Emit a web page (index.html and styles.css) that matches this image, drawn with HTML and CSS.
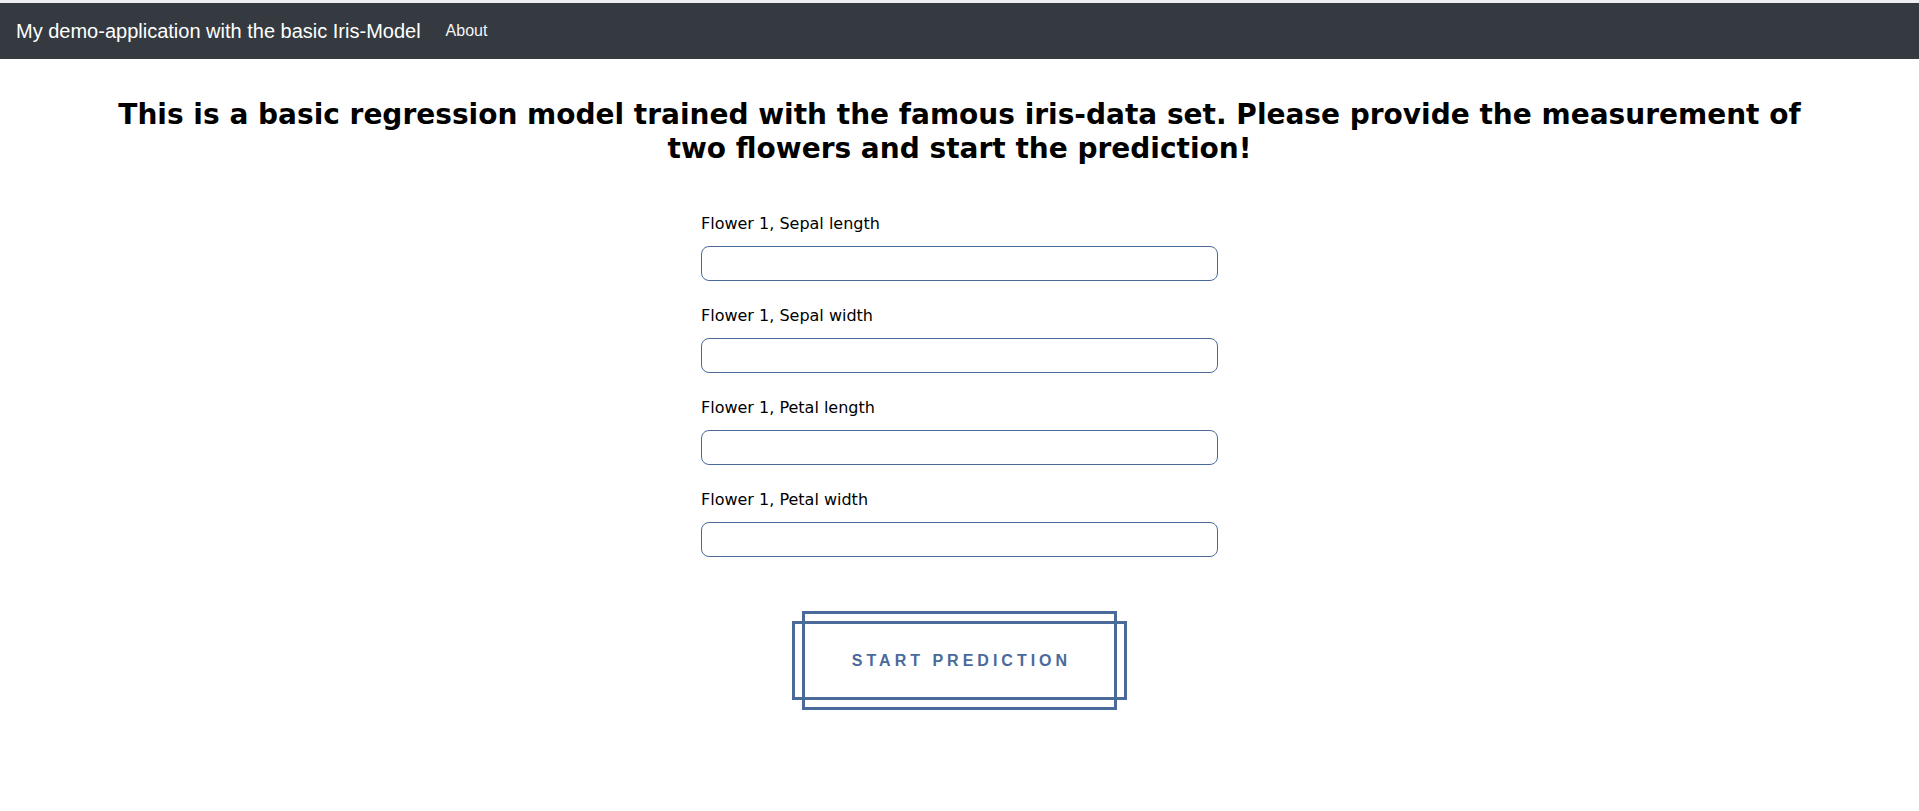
FILE: index.html
```html
<!DOCTYPE html>
<html lang="en">
<head>
<meta charset="utf-8">
<title>Iris demo</title>
<link rel="stylesheet" href="styles.css">
</head>
<body>
<div class="topstrip"></div>
<nav class="navbar">
  <a class="brand" href="#">My demo-application with the basic Iris-Model</a>
  <a class="nav-link" href="#">About</a>
</nav>
<main class="content">
  <h3 class="title">This is a basic regression model trained with the famous iris-data set. Please provide the measurement of two flowers and start the prediction!</h3>
  <form class="form">
    <div class="field">
      <label class="label">Flower 1, Sepal length</label>
      <input class="input" type="text">
    </div>
    <div class="field">
      <label class="label">Flower 1, Sepal width</label>
      <input class="input" type="text">
    </div>
    <div class="field">
      <label class="label">Flower 1, Petal length</label>
      <input class="input" type="text">
    </div>
    <div class="field">
      <label class="label">Flower 1, Petal width</label>
      <input class="input" type="text">
    </div>
    <div class="actions">
      <div class="btn-frame">
        <button class="btn-predict" type="button">START PREDICTION</button>
      </div>
    </div>
  </form>
</main>
</body>
</html>
```

FILE: styles.css
```css
* { box-sizing: border-box; }
html, body { margin: 0; padding: 0; background: #ffffff; }
body { font-family: "DejaVu Sans", sans-serif; color: #000; }

.topstrip { height: 3px; background: #eceeef; }

.navbar {
  height: 56px;
  background: #343a40;
  display: flex;
  align-items: center;
  padding: 0 16px;
}
.brand {
  font-family: "Liberation Sans", Arial, sans-serif;
  font-size: 20px;
  color: #ffffff;
  text-decoration: none;
  margin-right: 25px;
  line-height: 30px;
}
.nav-link {
  font-family: "Liberation Sans", Arial, sans-serif;
  font-size: 16px;
  color: #f4f4f4;
  text-decoration: none;
  line-height: 24px;
}

.content { display: flex; flex-direction: column; align-items: center; }

.title {
  font-family: "DejaVu Sans", sans-serif;
  font-weight: bold;
  font-size: 28px;
  line-height: 33.6px;
  text-align: center;
  margin: 39px 0 47px;
  width: 1720px;
}

.form { width: 517px; display: flex; flex-direction: column; }

.field { display: flex; flex-direction: column; margin-bottom: 23px; }
.label { font-size: 16px; line-height: 24px; margin-bottom: 10px; }
.input {
  height: 35px;
  border: 1px solid #4a6a9a;
  border-radius: 8px;
  padding: 0 12px;
  font-size: 16px;
  outline: none;
}

.actions { display: flex; justify-content: center; padding-top: 31px; }

.btn-frame {
  width: 315px;
  height: 99px;
  border: 3px solid #4a6a9a;
  display: flex;
  align-items: center;
  justify-content: center;
}

.btn-predict {
  flex-shrink: 0;
  width: 335px;
  height: 79px;
  background: transparent;
  border: 3px solid #4a6a9a;
  color: #4a6a9a;
  font-family: "Liberation Sans", Arial, sans-serif;
  font-weight: bold;
  font-size: 16px;
  letter-spacing: 4px;
  padding: 0 0 0 4px;
  cursor: pointer;
}
```
